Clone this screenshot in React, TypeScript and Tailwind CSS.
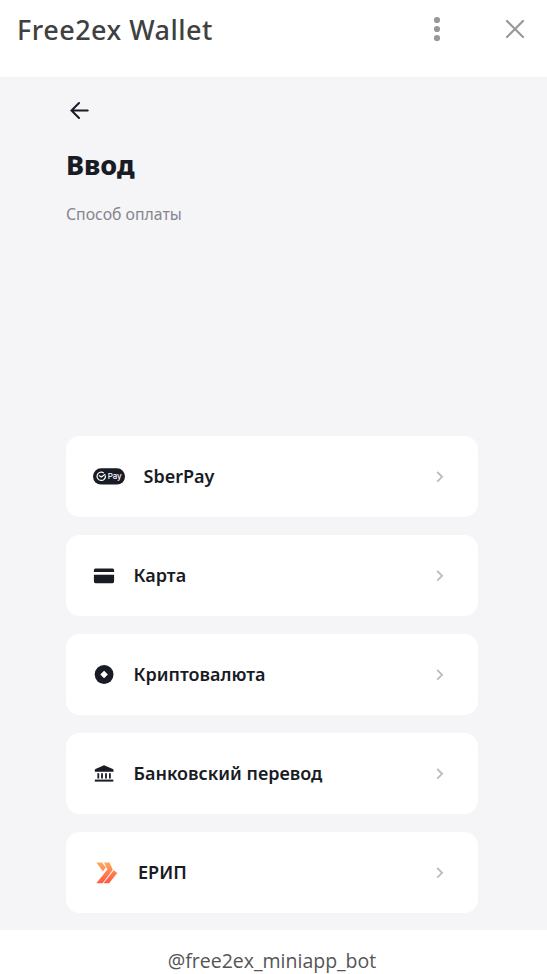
import type { ReactNode } from "react";

type PaymentMethod = {
  id: string;
  label: string;
  icon: ReactNode;
  labelClass: string;
};

function SberPayIcon() {
  return (
    <svg width="32" height="17" viewBox="0 0 32 17" className="shrink-0">
      <rect y=".3" width="32" height="16.2" rx="8" fill="#191b25" />
      <g fill="none" stroke="#fff" strokeWidth="1.2">
        <path d="M12.4 7.5a4.2 4.2 0 1 1-1.6-2.6" />
        <path d="M6 7.6 8.2 9.1l4.1-2.8" />
      </g>
      <text
        x="14.8"
        y="11.2"
        fill="#fff"
        fontSize="8"
        fontWeight="500"
        fontFamily="Inter, sans-serif"
        textLength="13.8"
      >
        Pay
      </text>
    </svg>
  );
}

function CardIcon() {
  return (
    <svg width="22" height="16" viewBox="0 0 22 16" fill="#191b25" className="shrink-0">
      <path d="M2.5.5h17a1.6 1.6 0 0 1 1.6 1.6v2H.9v-2A1.6 1.6 0 0 1 2.5.5Z" />
      <path d="M.9 6.8h20.2v6.8a1.7 1.7 0 0 1-1.7 1.7H2.6a1.7 1.7 0 0 1-1.7-1.7Z" />
    </svg>
  );
}

function CryptoIcon() {
  return (
    <svg width="22" height="20" viewBox="0 0 22 20" className="shrink-0">
      <circle cx="11.1" cy="9.5" r="9.4" fill="#191b25" />
      <path d="m11.1 5.7 3.8 3.8-3.8 3.8-3.8-3.8Z" fill="#fff" />
    </svg>
  );
}

function BankIcon() {
  return (
    <svg width="22" height="18" viewBox="0 0 22 18" fill="#191b25" className="shrink-0">
      <path d="M11 .2 19.8 4q.7.4.7 1v1.2q0 .6-.7.6H2.5q-.7 0-.7-.6V5q0-.6.7-1Z" />
      <path d="M4.4 8.2h1.8v5.4H4.4ZM8.1 8.2h1.8v5.4H8.1ZM12.1 8.2h1.8v5.4h-1.8ZM16 8.2h1.8v5.4H16Z" />
      <path d="M1.8 14.6h18.5v2H1.8Z" />
    </svg>
  );
}

function EripIcon() {
  return (
    <svg width="22" height="22" viewBox="0 0 22 22" className="block shrink-0">
      <defs>
        <linearGradient id="erip" gradientUnits="userSpaceOnUse" x1="8" y1="0" x2="10" y2="22">
          <stop offset="0" stopColor="#ffab5c" />
          <stop offset="1" stopColor="#ff5640" />
        </linearGradient>
      </defs>
      <g fill="url(#erip)">
        <path d="M.3.4h5.8l3.7 5.2-2.9 3.7Z" />
        <path d="M8 .4h5.5l3.3 7.4L6.6 21.2H.3L11.4 7.6Z" />
        <path d="m17.7 8.2 3.5 2.8-8.1 10.2H7.6Z" />
      </g>
    </svg>
  );
}

const methods: PaymentMethod[] = [
  { id: "sberpay", label: "SberPay", icon: <SberPayIcon />, labelClass: "ml-[18.5px]" },
  { id: "card", label: "Карта", icon: <CardIcon />, labelClass: "ml-[18.5px]" },
  { id: "crypto", label: "Криптовалюта", icon: <CryptoIcon />, labelClass: "ml-[18.5px]" },
  { id: "bank", label: "Банковский перевод", icon: <BankIcon />, labelClass: "ml-[18.5px]" },
  { id: "erip", label: "ЕРИП", icon: <span className="ml-[3px]"><EripIcon /></span>, labelClass: "ml-5" },
];

function MethodRow({ method }: { method: PaymentMethod }) {
  return (
    <button
      type="button"
      className="flex h-[81px] w-full items-center rounded-[14px] bg-white pr-[34px] pl-[27px] text-left"
    >
      {method.icon}
      <span className={`${method.labelClass} mb-0.5 text-[18px] leading-6 font-semibold text-[#191b25]`}>
        {method.label}
      </span>
      <svg width="8" height="12" viewBox="0 0 8 12" className="ml-auto shrink-0">
        <path d="m1.2 1 4.9 4.8-4.9 4.8" fill="none" stroke="#bcbcc0" strokeWidth="1.8" />
      </svg>
    </button>
  );
}

export default function App() {
  return (
    <div className="flex h-[974px] w-[547px] flex-col overflow-hidden bg-white font-['Noto_Sans','Open_Sans',sans-serif]">
      <header className="flex h-[77px] shrink-0 items-start pr-[22px] pl-[17px]">
        <h1 className="mt-3 text-[27px] leading-9 font-medium tracking-[0.5px] text-[#404040]">
          Free2ex Wallet
        </h1>
        <button type="button" aria-label="Menu" className="mt-4 ml-auto">
          <svg width="8" height="26" viewBox="0 0 8 26" fill="#999" className="block">
            <circle cx="4" cy="4" r="3.1" />
            <circle cx="4" cy="13" r="3.1" />
            <circle cx="4" cy="22" r="3.1" />
          </svg>
        </button>
        <button type="button" aria-label="Close" className="mt-5 ml-[64px]">
          <svg width="20" height="18" viewBox="0 0 20 18" className="block">
            <path
              d="m2 1 16 16M18 1 2 17"
              fill="none"
              stroke="#999"
              strokeWidth="2.2"
              strokeLinecap="round"
            />
          </svg>
        </button>
      </header>

      <main className="flex h-[853px] shrink-0 flex-col bg-[#f5f5f8] pr-[69px] pb-[17px] pl-[66px]">
        <button type="button" aria-label="Back" className="mt-6 ml-1 self-start">
          <svg width="20" height="18" viewBox="0 0 20 18" className="block">
            <path
              d="M17.7 9.5H1.5M9 2 1.5 9.5 9 17"
              fill="none"
              stroke="#191b25"
              strokeWidth="2"
              strokeLinecap="round"
            />
          </svg>
        </button>
        <h2 className="mt-7 text-[27px] leading-9 font-extrabold text-[#191b25]">Ввод</h2>
        <p className="mt-[19px] text-[15.8px] leading-6 text-[#85858f]">Способ оплаты</p>
        <div className="mt-auto flex flex-col gap-[18px]">
          {methods.map((m) => (
            <MethodRow key={m.id} method={m} />
          ))}
        </div>
      </main>

      <footer className="flex h-[62px] shrink-0 items-center justify-center pr-[3px] font-['Open_Sans','Noto_Sans',sans-serif] text-[19.5px] text-[#555]">
        @free2ex_miniapp_bot
      </footer>
    </div>
  );
}
